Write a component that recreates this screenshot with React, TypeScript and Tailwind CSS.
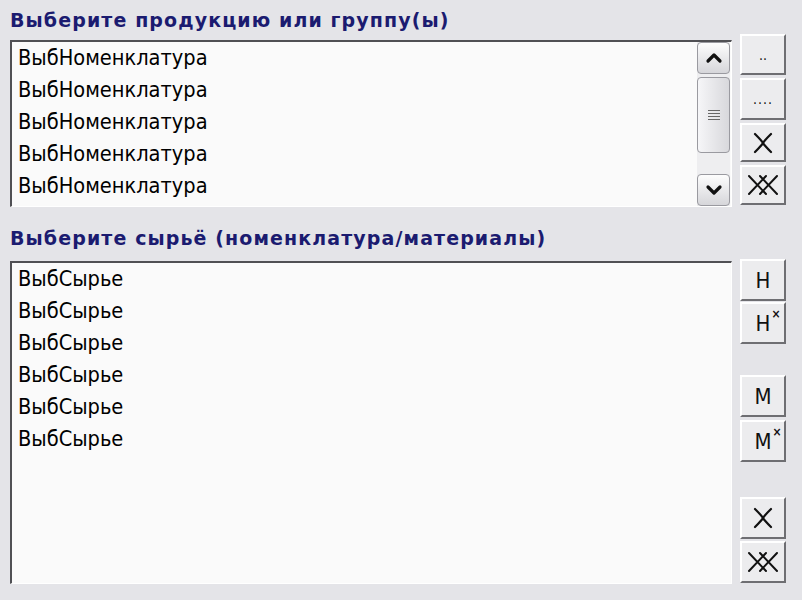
import React from "react";

const titleCls =
  "font-['DejaVu_Sans',sans-serif] font-bold text-[19px] text-[#1b1b70] tracking-[1.1px] whitespace-nowrap";
const itemCls =
  "h-[32px] flex items-center pl-[6px] font-['DejaVu_Sans_Condensed','DejaVu_Sans',sans-serif] text-[21.6px] text-black whitespace-nowrap";

function Btn({ children, h = 41 }: { children: React.ReactNode; h?: number }) {
  return (
    <div
      className="w-[46px] flex items-center justify-center bg-[#ececee] border-t-2 border-l-2 border-b-2 border-r-2 border-t-white border-l-white border-b-[#6e6e72] border-r-[#6e6e72] font-['DejaVu_Sans_Condensed','DejaVu_Sans',sans-serif] text-[22px] text-[#111]"
      style={{ height: h }}
    >
      {children}
    </div>
  );
}

function Cross({ double }: { double?: boolean }) {
  return double ? (
    <svg width="32" height="22" viewBox="0 0 32 22" fill="none" stroke="#111" strokeWidth="2" strokeLinecap="round">
      <path d="M2 2 L19 20 M2 20 L19 2" />
      <path d="M13 2 L30 20 M13 20 L30 2" />
    </svg>
  ) : (
    <svg width="20" height="22" viewBox="0 0 20 22" fill="none" stroke="#111" strokeWidth="2.2" strokeLinecap="round">
      <path d="M2 2 C7 7, 9 9, 10 11 C11 13, 13 15, 18 20" />
      <path d="M2 20 C7 15, 9 13, 10 11 C11 9, 13 7, 18 2" />
    </svg>
  );
}

function Sup({ base }: { base: string }) {
  return (
    <span className="relative">
      {base}
      <span className="absolute -right-[10px] top-[1px] text-[12px] font-bold leading-none">×</span>
    </span>
  );
}

function ScrollBtn({ up }: { up?: boolean }) {
  return (
    <div className="h-[32px] w-[33px] rounded-[4px] border border-[#9a9aa0] bg-gradient-to-b from-[#fdfdfd] to-[#d6d6da] flex items-center justify-center">
      <svg width="18" height="12" viewBox="0 0 18 12" fill="none" stroke="#111" strokeWidth="3.2" strokeLinecap="round" strokeLinejoin="round">
        {up ? <path d="M3 9 L9 3 L15 9" /> : <path d="M3 3 L9 9 L15 3" />}
      </svg>
    </div>
  );
}

export default function App() {
  const noms = Array(5).fill("ВыбНоменклатура");
  const raws = Array(6).fill("ВыбСырье");
  return (
    <div className="w-[802px] h-[600px] bg-[#e4e4e8] flex flex-col overflow-hidden">
      <div className="h-[34px] pl-[10px] pt-[7px] leading-[26px]">
        <span className={titleCls}>Выберите продукцию или группу(ы)</span>
      </div>
      <div className="flex items-start">
        <div className="ml-[10px] mt-[6px] w-[722px] h-[167px] bg-[#fafafa] border-t-2 border-l-2 border-t-[#505054] border-l-[#505054] border-b border-r border-b-white border-r-white flex">
          <div className="flex-1">
            {noms.map((t, i) => (
              <div key={i} className={itemCls}>
                {t}
              </div>
            ))}
          </div>
          <div className="w-[33px] mr-[1px] flex flex-col bg-[#eeeef0]">
            <ScrollBtn up />
            <div className="mt-[3px] h-[76px] w-[33px] rounded-[4px] border border-[#9a9aa0] bg-gradient-to-r from-[#f6f6f8] to-[#d8d8dc] flex flex-col items-center justify-center gap-[2px]">
              <div className="w-[12px] h-[1px] bg-[#666]" />
              <div className="w-[12px] h-[1px] bg-[#666]" />
              <div className="w-[12px] h-[1px] bg-[#666]" />
              <div className="w-[12px] h-[1px] bg-[#666]" />
            </div>
            <div className="flex-1" />
            <ScrollBtn />
          </div>
        </div>
        <div className="ml-[8px] flex flex-col gap-[3px]">
          <Btn h={41}>
            <span className="text-[14px] leading-none">..</span>
          </Btn>
          <Btn h={42}>
            <span className="text-[14px] leading-none tracking-[1px]">....</span>
          </Btn>
          <Btn h={39}>
            <Cross />
          </Btn>
          <Btn h={40}>
            <Cross double />
          </Btn>
        </div>
      </div>
      <div className="h-[52px] pl-[10px] pt-[18px] leading-[26px]">
        <span className={titleCls}>Выберите сырьё (номенклатура/материалы)</span>
      </div>
      <div className="flex items-start">
        <div className="ml-[10px] mt-[2px] w-[722px] h-[323px] bg-[#fafafa] border-t-2 border-l-2 border-t-[#505054] border-l-[#505054] border-b border-r border-b-white border-r-white">
          {raws.map((t, i) => (
            <div key={i} className={itemCls}>
              {t}
            </div>
          ))}
        </div>
        <div className="ml-[8px] flex flex-col">
          <Btn h={42}>Н</Btn>
          <div className="h-[1px]" />
          <Btn h={42}>
            <Sup base="Н" />
          </Btn>
          <div className="h-[31px]" />
          <Btn h={42}>М</Btn>
          <div className="h-[3px]" />
          <Btn h={42}>
            <Sup base="М" />
          </Btn>
          <div className="h-[35px]" />
          <Btn h={42}>
            <Cross />
          </Btn>
          <div className="h-[2px]" />
          <Btn h={42}>
            <Cross double />
          </Btn>
        </div>
      </div>
    </div>
  );
}
